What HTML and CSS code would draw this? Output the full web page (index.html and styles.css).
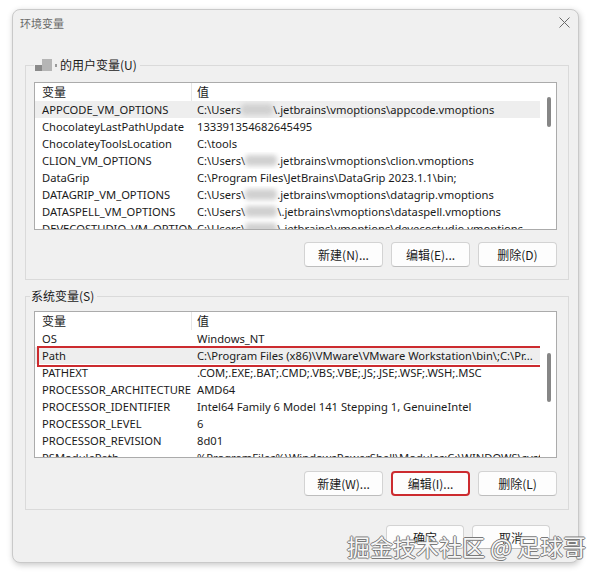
FILE: index.html
```html
<!DOCTYPE html>
<html lang="zh-CN">
<head>
<meta charset="utf-8">
<title>环境变量</title>
<link rel="stylesheet" href="styles.css">
</head>
<body>
<div class="window">
  <div class="titlebar">
    <span class="title">环境变量</span>
    <svg class="close" width="11" height="11" viewBox="0 0 11 11"><path d="M0.5 0.5L10.5 10.5M10.5 0.5L0.5 10.5" stroke="#6a6a6a" stroke-width="1" fill="none"/></svg>
  </div>
  <div class="content">
    <fieldset class="group group-user">
      <legend><span class="avatar"><i class="a1"></i><i class="a2"></i></span><i class="dot"></i>的用户变量(U)</legend>
      <div class="list list-user">
        <div class="list-body">
          <div class="row head"><span class="c1">变量</span><span class="c2">值</span></div>
          <div class="row sel"><span class="c1">APPCODE_VM_OPTIONS</span><span class="c2">C:\Users<i class="blur"></i>\.jetbrains\vmoptions\appcode.vmoptions</span></div>
          <div class="row"><span class="c1">ChocolateyLastPathUpdate</span><span class="c2">133391354682645495</span></div>
          <div class="row"><span class="c1">ChocolateyToolsLocation</span><span class="c2">C:\tools</span></div>
          <div class="row"><span class="c1">CLION_VM_OPTIONS</span><span class="c2">C:\Users\<i class="blur"></i>.jetbrains\vmoptions\clion.vmoptions</span></div>
          <div class="row"><span class="c1">DataGrip</span><span class="c2">C:\Program Files\JetBrains\DataGrip 2023.1.1\bin;</span></div>
          <div class="row"><span class="c1">DATAGRIP_VM_OPTIONS</span><span class="c2">C:\Users\<i class="blur"></i>.jetbrains\vmoptions\datagrip.vmoptions</span></div>
          <div class="row"><span class="c1">DATASPELL_VM_OPTIONS</span><span class="c2">C:\Users\<i class="blur"></i>\.jetbrains\vmoptions\dataspell.vmoptions</span></div>
          <div class="row"><span class="c1">DEVECOSTUDIO_VM_OPTIONS</span><span class="c2">C:\Users\<i class="blur"></i>\.jetbrains\vmoptions\devecostudio.vmoptions</span></div>
        </div>
        <div class="scroll"><div class="thumb thumb-user"></div></div>
      </div>
      <div class="buttons">
        <button class="btn">新建(N)...</button>
        <button class="btn">编辑(E)...</button>
        <button class="btn">删除(D)</button>
      </div>
    </fieldset>

    <fieldset class="group group-sys">
      <legend>系统变量(S)</legend>
      <div class="list list-sys">
        <div class="list-body">
          <div class="row head"><span class="c1">变量</span><span class="c2">值</span></div>
          <div class="row"><span class="c1">OS</span><span class="c2">Windows_NT</span></div>
          <div class="row sel marked"><span class="c1">Path</span><span class="c2">C:\Program Files (x86)\VMware\VMware Workstation\bin\;C:\Pr...</span></div>
          <div class="row"><span class="c1">PATHEXT</span><span class="c2">.COM;.EXE;.BAT;.CMD;.VBS;.VBE;.JS;.JSE;.WSF;.WSH;.MSC</span></div>
          <div class="row"><span class="c1">PROCESSOR_ARCHITECTURE</span><span class="c2">AMD64</span></div>
          <div class="row"><span class="c1">PROCESSOR_IDENTIFIER</span><span class="c2">Intel64 Family 6 Model 141 Stepping 1, GenuineIntel</span></div>
          <div class="row"><span class="c1">PROCESSOR_LEVEL</span><span class="c2">6</span></div>
          <div class="row"><span class="c1">PROCESSOR_REVISION</span><span class="c2">8d01</span></div>
          <div class="row"><span class="c1">PSModulePath</span><span class="c2">%ProgramFiles%\WindowsPowerShell\Modules;C:\WINDOWS\system32\...</span></div>
        </div>
        <div class="scroll"><div class="thumb thumb-sys"></div></div>
      </div>
      <div class="buttons buttons-sys">
        <button class="btn">新建(W)...</button>
        <button class="btn btn-marked">编辑(I)...</button>
        <button class="btn">删除(L)</button>
      </div>
    </fieldset>
  </div>
  <div class="footer">
    <button class="btn btn-foot">确定</button>
    <button class="btn btn-foot">取消</button>
  </div>
  <div class="watermark">掘金技术社区 @ 足球哥</div>
</div>
</body>
</html>
```
FILE: styles.css
```css
* { box-sizing: border-box; }
html, body { margin: 0; padding: 0; background: #ffffff; }
body {
  width: 591px;
  height: 578px;
  overflow: hidden;
  font-family: "Noto Sans", "Noto Sans CJK SC", sans-serif;
  color: #1a1a1a;
}
.window {
  position: relative;
  margin: 9px 0 0 12px;
  width: 567px;
  height: 554px;
  border: 1px solid #c9c9c9;
  border-radius: 8px;
  background: #f0f0f0;
  box-shadow: 1px 2px 6px rgba(0, 0, 0, 0.22);
  display: flex;
  flex-direction: column;
}
.titlebar {
  height: 25px;
  display: flex;
  align-items: center;
  justify-content: space-between;
  padding: 0 8px 0 7px;
}
.title {
  font-family: "Noto Sans CJK SC", sans-serif;
  font-size: 11px;
  color: #6a6a6a;
}
.content {
  padding: 22px 9px 0 12px;
}
.group {
  margin: 0;
  min-width: 0;
  border: 1px solid #dadada;
  padding: 9px 11px 12px 8px;
}
.group legend {
  padding: 0 3px 0 1px;
  font-family: "Noto Sans CJK SC", sans-serif;
  font-size: 12px;
  line-height: 16px;
  color: #1a1a1a;
  display: flex;
  align-items: center;
}
.avatar {
  position: relative;
  display: inline-block;
  width: 17px;
  height: 12px;
  margin-right: 3px;
  filter: blur(0.6px);
}
.avatar .a1 {
  position: absolute;
  left: 0; bottom: 0;
  width: 7px; height: 6px;
  background: #8a8a8a;
}
.avatar .a2 {
  position: absolute;
  left: 7px; bottom: 0;
  width: 10px; height: 12px;
  background: #b5b5b5;
}
.dot {
  display: inline-block;
  width: 2px; height: 3px;
  background: #9a9a9a;
  margin-right: 3px;
}
.group-sys {
  margin-top: 8px;
  padding-top: 7px;
  padding-bottom: 13px;
}
.group-sys legend { margin-left: -4px; }

.list {
  display: flex;
  border: 1px solid #ababab;
  background: #ffffff;
}
.list-user { height: 148px; }
.list-sys { height: 147px; }
.list-body {
  flex: 1;
  min-width: 0;
  overflow: hidden;
}
.row {
  position: relative;
  display: grid;
  grid-template-columns: 157px minmax(0, 1fr);
  height: 17px;
  line-height: 17px;
  font-size: 11.2px;
  white-space: nowrap;
}
.row span { overflow: hidden; }
.c1 { padding-left: 7px; }
.c2 { padding-left: 5px; }
.head {
  height: 18px;
  line-height: 18px;
  font-size: 12px;
  font-family: "Noto Sans CJK SC", sans-serif;
}
.head .c1 { border-right: 1px solid #e6e6e6; }
.sel { background: #eeeeee; }
.marked::after {
  content: "";
  position: absolute;
  top: -1px; bottom: -3px;
  left: 2px; right: -2px;
  border: 2px solid #cc2b2f;
}
.blur {
  display: inline-block;
  width: 32px;
  height: 11px;
  vertical-align: -1px;
  background: #d0d0d0;
  border-radius: 4px;
  filter: blur(2.5px);
}
.scroll {
  flex: none;
  width: 16px;
}
.thumb {
  width: 4px;
  margin-left: 7px;
  background: #868686;
  border-radius: 2px;
}
.thumb-user { margin-top: 14px; height: 30px; }
.thumb-sys { margin-top: 41px; height: 49px; }

.buttons {
  display: flex;
  justify-content: flex-end;
  gap: 8px;
  margin-top: 12px;
}
.buttons-sys { margin-top: 13px; }
.btn {
  width: 79px;
  height: 25px;
  padding: 0;
  border: 1px solid #d3d3d3;
  border-bottom-color: #bdbdbd;
  border-radius: 4px;
  background: #fdfdfd;
  font-family: "Noto Sans CJK SC", sans-serif;
  font-size: 12px;
  color: #1b1b1b;
  display: flex;
  align-items: center;
  justify-content: center;
}
.btn-marked { border: 2px solid #cc2b2f; }
.footer {
  display: flex;
  justify-content: flex-end;
  gap: 8px;
  padding: 15px 28px 0 0;
}
.btn-foot { width: 78px; height: 24px; }
.watermark {
  position: absolute;
  left: 334px;
  top: 522px;
  font-family: "Noto Sans CJK SC", sans-serif;
  font-size: 23px;
  line-height: 28px;
  white-space: nowrap;
  color: #f7f7f7;
  text-shadow: 1px 0 #7a7a7a, -1px 0 #7a7a7a, 0 1px #7a7a7a, 0 -1px #7a7a7a;
}
```
